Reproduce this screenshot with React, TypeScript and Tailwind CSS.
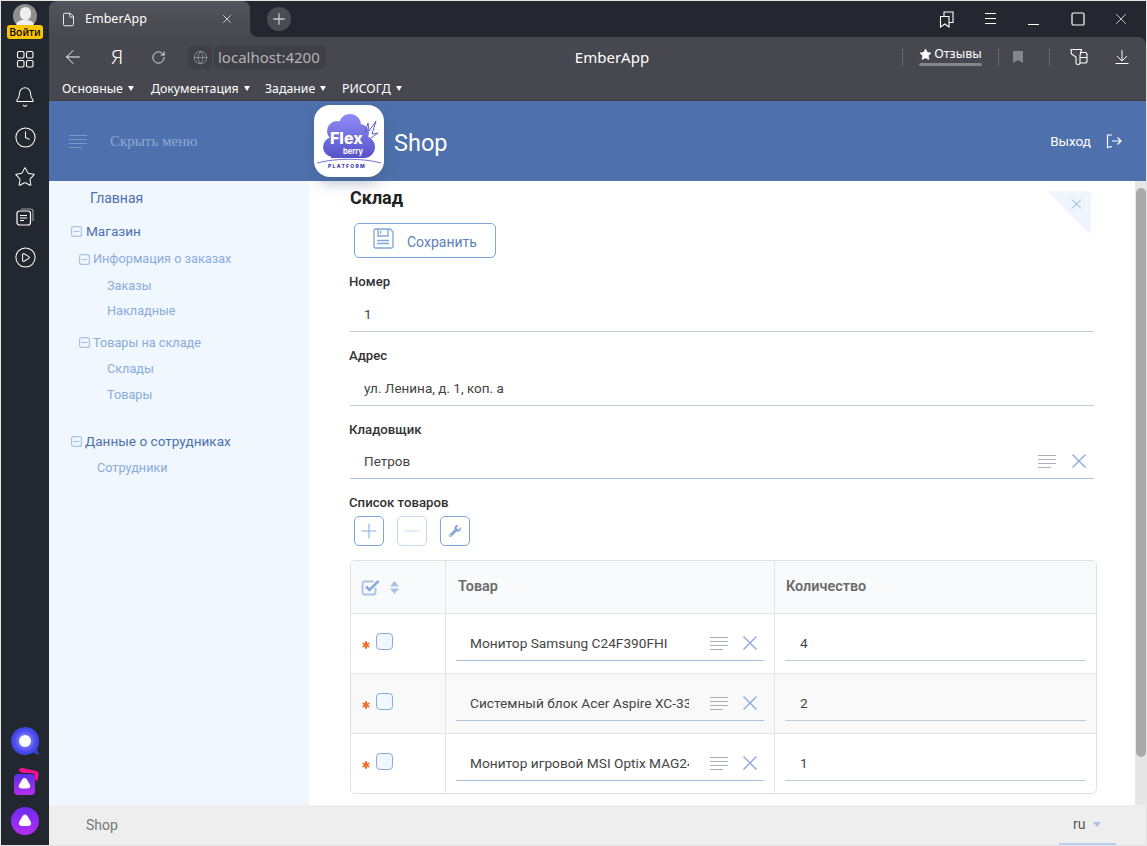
import React from "react";
import { ArrowLeft, Asterisk, Bell, CirclePlay, Clock, File, Globe, Minus, Plus, RotateCw, Square, Star, X } from "lucide-react";
import { FaWrench } from "react-icons/fa";

const pageFont = "font-['Roboto','Liberation_Sans',sans-serif]";

const ListIcon = ({ className = "" }: { className?: string }) => (
  <svg viewBox="0 0 18 14" className={`w-[18px] h-[14px] ${className}`} fill="none" stroke="currentColor" strokeWidth="1">
    <path d="M0 1.5h18M0 5.5h18M0 9.5h18M0 13.5h13" />
  </svg>
);

const CloseIcon = ({ className = "" }: { className?: string }) => (
  <svg viewBox="0 0 14 14" className={`w-[14px] h-[14px] ${className}`} fill="none" stroke="#8aabdc" strokeWidth="1.4">
    <path d="M0.500 0.500l13 13M13.500 0.500l-13 13" />
  </svg>
);

const Tree = ({ className = "" }: { className?: string }) => (
  <svg viewBox="0 0 11 11" className={`w-[11px] h-[11px] shrink-0 ${className}`} fill="none" stroke="#a9c3e8" strokeWidth="1.2">
    <rect x="0.6" y="0.6" width="9.8" height="9.8" rx="2" />
    <path d="M2.5 5.5h6" />
  </svg>
);

const Caret = () => <span className="ml-[5px] inline-block w-0 h-0 border-x-[3.5px] border-x-transparent border-t-[5px] border-t-white mb-[2px]" />;

const Divider = () => <div className="w-px h-[17px] bg-[#6a6a72]" />;

const RailSlot = ({ children }: { children: React.ReactNode }) => (
  <div className="h-[20px] w-[24px] flex items-center justify-center">{children}</div>
);

const LeftRail = () => (
  <aside className="w-[48px] shrink-0 bg-[#23272f] flex flex-col items-center text-white">
    <div className="h-[38px] w-[48px] flex flex-col items-center pt-[3px]">
      <div className="w-[24px] h-[24px] rounded-full bg-[#8f8f8f] overflow-hidden flex flex-col items-center">
        <div className="w-[11px] h-[14px] rounded-full bg-[#eeeeee] mt-[3px]" />
        <div className="w-[20px] h-[8px] rounded-t-full bg-[#eeeeee]" />
      </div>
      <div className="-mt-[3px] relative w-[36px] h-[14px] rounded-[3px] bg-[#fdc500] text-black text-[10.5px] font-medium leading-[14px] text-center font-['Noto_Sans',sans-serif]">Войти</div>
    </div>
    <div className="flex flex-col items-center gap-[20px] mt-[10px]">
      <RailSlot>
        <svg viewBox="0 0 20 20" className="w-[20px] h-[20px]" fill="none" stroke="currentColor" strokeWidth="1.1">
          <rect x="2.5" y="2.5" width="6.5" height="6.5" rx="1.5" />
          <rect x="11.5" y="2.5" width="6.5" height="6.5" rx="1.5" />
          <rect x="2.5" y="11.5" width="6.5" height="6.5" rx="1.5" />
          <rect x="11.5" y="11.5" width="6.5" height="6.5" rx="1.5" />
        </svg>
      </RailSlot>
      <div className="-mt-[2px]"><RailSlot><Bell size={22} strokeWidth={1.1} /></RailSlot></div>
      <RailSlot><Clock size={23} strokeWidth={1.05} /></RailSlot>
      <RailSlot><Star size={22} strokeWidth={1.1} /></RailSlot>
      <RailSlot>
        <svg viewBox="0 0 20 20" className="w-[20px] h-[20px]" fill="none" stroke="currentColor" strokeWidth="1.2">
          <rect x="2" y="4" width="13.5" height="14" rx="2.5" />
          <path d="M5 8.5h7M5 11h7M5 13.5h4" />
          <path d="M6 2h9.5A2.5 2.5 0 0 1 18 4.500V14" stroke="#9a9a9a" />
        </svg>
      </RailSlot>
      <RailSlot><CirclePlay size={23} strokeWidth={1.05} /></RailSlot>
    </div>
    <div className="mt-auto flex flex-col items-center gap-[12px] pb-[10px]">
      <svg viewBox="0 0 28 28" className="w-[28px] h-[28px]">
        <defs>
          <radialGradient id="ali" cx="50%" cy="50%" r="55%">
            <stop offset="0%" stopColor="#a9a6ff" />
            <stop offset="70%" stopColor="#4a4af0" />
            <stop offset="100%" stopColor="#2f46d0" />
          </radialGradient>
        </defs>
        <path d="M14 0a14 14 0 1 0 8 25.500L28 28l-2-6.500A14 14 0 0 0 14 0z" fill="url(#ali)" />
        <circle cx="14" cy="14" r="6" fill="#fff" />
      </svg>
      <svg viewBox="0 0 28 28" className="w-[28px] h-[28px]">
        <defs>
          <linearGradient id="sq" x1="0" y1="0" x2="0" y2="1">
            <stop offset="0%" stopColor="#5a30e8" />
            <stop offset="100%" stopColor="#b22ef0" />
          </linearGradient>
        </defs>
        <path d="M8 4c0-3 2-3 4-3l13 3c2 .5 3 2 2.500 4l-1 6z" fill="#f5128c" />
        <rect x="3" y="6" width="21" height="21" rx="4" fill="#23272f" />
        <rect x="3" y="7" width="21" height="21" rx="4" fill="url(#sq)" />
        <path d="M13.500 11c1.200 0 2 .9 2.800 2.300l2.500 4.300c1.100 2 .2 3.900-2.300 3.900h-6c-2.500 0-3.400-1.900-2.300-3.900l2.500-4.300c.8-1.400 1.600-2.300 2.800-2.300z" fill="#fff" />
      </svg>
      <svg viewBox="0 0 28 28" className="w-[28px] h-[28px]">
        <defs>
          <linearGradient id="ci" x1="0" y1="0" x2="0" y2="1">
            <stop offset="0%" stopColor="#6a2cf0" />
            <stop offset="100%" stopColor="#b52cf0" />
          </linearGradient>
        </defs>
        <circle cx="14" cy="14" r="14" fill="url(#ci)" />
        <path d="M14 7.500c1.300 0 2.100 1 3 2.500l2.600 4.600c1.300 2.400.2 4.400-2.500 4.400h-6.200c-2.700 0-3.800-2-2.500-4.400L11 10c.9-1.500 1.700-2.500 3-2.500z" fill="#fff" />
      </svg>
    </div>
  </aside>
);

const BrowserChrome = () => (
  <div className="bg-[#24272f] text-white font-['Noto_Sans','Open_Sans',sans-serif]">
    <div className="h-[36px] flex bg-[linear-gradient(#24272f_50%,#47474f_50%)]">
      <div className="w-[201px] rounded-t-lg bg-[linear-gradient(#54545c,#47474f)] flex items-center pl-[12px] pr-[16px]">
        <File size={15} strokeWidth={1.4} />
        <span className="ml-[9px] text-[12.5px] flex-1">EmberApp</span>
        <X size={14} strokeWidth={1.2} />
      </div>
      <div className="flex-1 rounded-bl-lg bg-[#24272f] flex items-center pl-[17px]">
        <div className="w-[24px] h-[24px] rounded-full bg-[#4a4c54] flex items-center justify-center">
          <Plus size={18} strokeWidth={1.7} className="text-[#c8c8c8]" />
        </div>
        <div className="ml-auto flex items-center gap-[26px] pr-[16px]">
          <svg viewBox="0 0 18 18" className="w-[18px] h-[18px] -ml-[1px]" fill="none" stroke="currentColor" strokeWidth="1.1">
            <path d="M2.500 6.500h8.500v10.500l-4.200-3-4.300 3zM6 6.500V2h9v10.500h-4" />
          </svg>
          <svg viewBox="0 0 18 18" className="w-[18px] h-[18px]" fill="none" stroke="currentColor" strokeWidth="1">
            <path d="M3 3.500h11M3 8.500h11M3 13.500h11" />
          </svg>
          <svg viewBox="0 0 18 18" className="w-[18px] h-[18px]" fill="none" stroke="currentColor" strokeWidth="1">
            <path d="M2 14.500h11" />
          </svg>
          <Square size={16} strokeWidth={1.2} absoluteStrokeWidth />
          <X size={18} strokeWidth={1} />
        </div>
      </div>
    </div>
    <div className="bg-[#47474f] rounded-tr-lg h-[64px] border-b border-[#3c3c44]">
      <div className="h-[40px] flex items-center">
        <div className="w-[278px] flex items-center shrink-0">
          <ArrowLeft size={22} strokeWidth={1.05} className="ml-[13px]" />
          <span className="ml-[27px] w-[14px] text-[20px] leading-[24px] font-light">Я</span>
          <RotateCw size={15} strokeWidth={1.3} className="ml-[26px]" />
          <div className="ml-[22px] w-[24px] h-[24px] rounded-md bg-[#3e3f47] flex items-center justify-center">
            <Globe size={15} strokeWidth={1.2} className="text-[#a0a0a0]" />
          </div>
          <div className="ml-[2px] h-[24px] px-[4px] w-[112px] rounded-md bg-[#3e3f47] text-[15px] leading-[24px] text-[#b4b4b4] whitespace-nowrap">localhost:4200</div>
        </div>
        <div className="flex-1 text-center text-[15px] pr-[5px]">EmberApp</div>
        <div className="flex items-center pr-[17px]">
          <Divider />
          <div className="flex flex-col items-center w-[63px] ml-[16px]">
            <span className="text-[12.5px] leading-[16px] flex items-center -mt-[2px]">
              <Star size={13} fill="white" strokeWidth={1} className="mr-[2px]" />
              Отзывы
            </span>
            <span className="w-full h-[3px] rounded-full bg-[#85858b] mt-[1px]" />
          </div>
          <div className="ml-[16px]"><Divider /></div>
          <svg viewBox="0 0 12 14" className="w-[12px] h-[14px] ml-[13px]"><path d="M1 1h10v12l-5-3-5 3z" fill="#85858b" /></svg>
          <div className="ml-[25px]"><Divider /></div>
          <svg viewBox="0 0 18 18" className="w-[18px] h-[18px] ml-[20px]" fill="none" stroke="currentColor" strokeWidth="1.100">
            <path d="M1 1.500h10.500l-1.500 6v7.500c0 2-4 2-4 0V9L1.500 6z" />
            <path d="M10.500 4.500h4.500a2 2 0 0 1 2 2V13a2 2 0 0 1-2 2h-5M10 9.500h7" />
          </svg>
          <svg viewBox="0 0 14 14" className="w-[14px] h-[14px] ml-[27px]" fill="none" stroke="currentColor" strokeWidth="1">
            <path d="M7 0v10.500M2 6l5 5 5-5M0.500 13.500h13" />
          </svg>
        </div>
      </div>
      <div className="flex items-center text-[12.3px] pl-[13px] leading-[18px] mt-[3px]">
        <span className="w-[89px]">Основные<Caret /></span>
        <span className="w-[114px]">Документация<Caret /></span>
        <span className="w-[77px]">Задание<Caret /></span>
        <span>РИСОГД<Caret /></span>
      </div>
    </div>
  </div>
);

const Logo = () => (
  <div className="relative w-[70px] h-[72px] rounded-[16px] bg-white shadow-[0_6px_14px_rgba(60,80,120,0.35)] shrink-0">
    <svg viewBox="0 0 70 72" className="w-full h-full">
      <defs>
        <linearGradient id="cloud" gradientUnits="userSpaceOnUse" x1="0" y1="9" x2="0" y2="54">
          <stop offset="0%" stopColor="#8f8cf6" />
          <stop offset="100%" stopColor="#5552c8" />
        </linearGradient>
      </defs>
      <g fill="url(#cloud)">
        <circle cx="36" cy="20" r="11" />
        <circle cx="23" cy="26" r="10" />
        <circle cx="46" cy="28" r="9" />
        <circle cx="19" cy="42" r="10" />
        <circle cx="50" cy="42" r="11" />
        <rect x="17" y="24" width="34" height="29" />
      </g>
      <path d="M3 58c18-5 46-5 64 0" fill="none" stroke="#5350c4" strokeWidth="0.8" />
      <path d="M51 28l3-10 1 8 7-10-4 13 6-1-7 5" stroke="#5350c4" strokeWidth="0.9" fill="none" />
      <text x="16" y="39" fontFamily="Inter, sans-serif" fontWeight="800" fontSize="16" fill="#fff">Flex</text>
      <text x="29" y="49" fontFamily="Inter, sans-serif" fontWeight="700" fontSize="7.500" fill="#fff">berry</text>
      <text x="14" y="63" fontFamily="Inter, sans-serif" fontWeight="800" fontSize="5" letterSpacing="1.300" fill="#3f3cb8">PLATFORM</text>
    </svg>
  </div>
);

const AppHeader = () => (
  <header className="h-[80px] bg-[#4e71ad] flex items-center shrink-0">
    <div className="w-[265px] shrink-0 flex items-center pl-[20px]">
      <ListIcon className="text-[#7c98c8]" />
      <span className="ml-[23px] font-['Liberation_Serif',serif] text-[15px] text-[#8fa8d2]">Скрыть меню</span>
    </div>
    <Logo />
    <span className={`ml-[10px] pt-[5px] text-[23.5px] text-white ${pageFont}`}>Shop</span>
    <div className={`ml-auto flex items-center pr-[24px] text-[13.5px] text-white ${pageFont}`}>
      Выход
      <svg viewBox="0 0 16 18" className="ml-[15px] w-[16px] h-[18px]" fill="none" stroke="#ffffff" strokeWidth="1.200">
        <path d="M6 3H1.500v12.500L6 14.500M6 9h9M11.500 5.500L15 9l-3.500 3.500" />
      </svg>
    </div>
  </header>
);

const Sidebar = () => (
  <nav className={`w-[260px] shrink-0 bg-[#f0f7ff] rounded-tr-md ${pageFont} text-[13.6px]`}>
    <div className="h-[34px] pl-[41px] leading-[34px] text-[14px] text-[#4e71ad]">Главная</div>
    <div className="h-[32px] pl-[22px] flex items-center text-[#4e71ad]"><Tree /><span className="ml-[4px]">Магазин</span></div>
    <div className="text-[12.7px] text-[#8aabdc]">
      <div className="h-[24px] pl-[30px] flex items-center"><Tree /><span className="ml-[3px]">Информация о заказах</span></div>
      <div className="h-[26px] pl-[58px] leading-[30px]">Заказы</div>
      <div className="h-[26px] pl-[58px] leading-[28px]">Накладные</div>
      <div className="h-[36px] pl-[30px] flex items-center pt-[3px]"><Tree /><span className="ml-[3px]">Товары на складе</span></div>
      <div className="h-[26px] pl-[58px] leading-[20px]">Склады</div>
      <div className="h-[26px] pl-[58px] leading-[20px]">Товары</div>
    </div>
    <div className="h-[34px] mt-[13px] pl-[22px] flex items-center text-[#4e71ad]"><Tree /><span className="ml-[3px]">Данные о сотрудниках</span></div>
    <div className="h-[18px] pl-[48px] text-[12.7px] leading-[20px] text-[#8aabdc]">Сотрудники</div>
  </nav>
);

const Field = ({ label, value, active, lookup }: { label: string; value: string; active?: boolean; lookup?: boolean }) => (
  <div className={`w-[744px] ${active ? "h-[73px]" : "h-[74px]"}`}>
    <div className="h-[20px] text-[13.2px] leading-[20px] font-medium text-[#333] -ml-px">{label}</div>
    <div className={`${active ? "mt-[4px]" : "mt-[5px]"} h-[35px] flex items-center pl-[14px] text-[13.5px] text-[#444] border-b ${active ? "border-[#a9c3e0]" : "border-[#c4ccd4]"}`}>
      <span className="flex-1">{value}</span>
      {lookup && (
        <>
          <ListIcon className="text-[#a8b0ba]" />
          <CloseIcon className="ml-[16px] mr-[8px]" />
        </>
      )}
    </div>
  </div>
);

const IconButton = ({ children, muted }: { children: React.ReactNode; muted?: boolean }) => (
  <button className={`w-[30px] h-[30px] rounded-[5px] border flex items-center justify-center ${muted ? "border-[#c8daf0]" : "border-[#7ea6d8]"}`}>
    {children}
  </button>
);

const rows = [
  { name: "Монитор Samsung C24F390FHI", qty: "4" },
  { name: "Системный блок Acer Aspire XC-330", qty: "2" },
  { name: "Монитор игровой MSI Optix MAG241C", qty: "1" },
];

const GoodsTable = () => (
  <div className="mt-[14px] w-[747px] h-[234px] border border-[#e0e1e2] rounded-[5px] overflow-hidden text-[13.7px]">
    <div className="h-[52px] bg-[#f9fafb] flex text-[14.4px] text-[#6b6b6b] font-semibold">
      <div className="w-[95px] border-r border-[#e4e5e6] flex items-center pl-[10px]">
        <svg viewBox="0 0 19 17" className="w-[19px] h-[17px]" fill="none">
          <path d="M14.500 9v4.500a2 2 0 0 1-2 2h-9a2 2 0 0 1-2-2v-9a2 2 0 0 1 2-2h9" stroke="#a9c3e8" strokeWidth="1.800" />
          <path d="M5 7.500l3.500 3.500L17.500 2" stroke="#8aabdc" strokeWidth="2.600" />
        </svg>
        <svg viewBox="0 0 9 13" className="ml-[10px] w-[9px] h-[13px]" fill="#a9c3e8">
          <path d="M4.500 0L9 5.500H0zM0 7.500h9L4.500 13z" />
        </svg>
      </div>
      <div className="w-[329px] border-r border-[#e4e5e6] flex items-center pl-[12px]">Товар</div>
      <div className="flex-1 flex items-center pl-[11px]">Количество</div>
    </div>
    {rows.map((row, i) => (
      <div key={row.name} className={`h-[60px] flex border-t border-[#e4e5e6] ${i === 1 ? "bg-[#f9f9f9]" : ""}`}>
        <div className="w-[95px] border-r border-[#e4e5e6] flex items-center pl-[9px] pb-[2px]">
          <Asterisk size={12} strokeWidth={4} className="text-[#f2702d] mt-[4px]" />
          <span className="ml-[4px] w-[17px] h-[17px] rounded-[4px] bg-[#f0f7ff] border border-[#8aabdc] -mt-[3px]" />
        </div>
        <div className="w-[329px] border-r border-[#e4e5e6] px-[10px]">
          <div className="mt-[12px] h-[35px] flex items-center border-b border-[#a9c3e0] pl-[14px] text-[#444]">
            <span className="w-[219px] overflow-hidden whitespace-nowrap">{row.name}</span>
            <ListIcon className="ml-[21px] text-[#a8b0ba]" />
            <CloseIcon className="ml-[15px]" />
          </div>
        </div>
        <div className="flex-1 px-[10px]">
          <div className="mt-[12px] h-[35px] flex items-center border-b border-[#c4ccd4] pl-[15px] text-[#444]">{row.qty}</div>
        </div>
      </div>
    ))}
  </div>
);

const Content = () => (
  <main className={`relative flex-1 pl-[41px] ${pageFont}`}>
    <h1 className="h-[34px] leading-[34px] text-[18px] font-bold text-[#222]">Склад</h1>
    <button className="ml-[4px] mt-[8px] w-[142px] h-[35px] rounded-[5px] border border-[#7ea6d8] flex items-center pl-[18px] text-[14px] text-[#5a82bd]">
      <svg viewBox="0 0 21 21" className="w-[21px] h-[21px] -mt-[4px]" fill="none" stroke="#7ea6d8" strokeWidth="1.300">
        <path d="M1 2.500A1.500 1.500 0 0 1 2.500 1H17l3 3v14.500a1.500 1.500 0 0 1-1.500 1.500h-16A1.500 1.500 0 0 1 1 18.500z" />
        <path d="M5 1v7h10V1M7.500 3v3M4 12.500h12M4 15.500h12" />
      </svg>
      <span className="ml-[13px] pt-[3px]">Сохранить</span>
    </button>
    <div className="mt-[14px]">
      <Field label="Номер" value="1" />
      <Field label="Адрес" value="ул. Ленина, д. 1, коп. а" />
      <Field label="Кладовщик" value="Петров" active lookup />
    </div>
    <div className="h-[20px] text-[13.2px] leading-[20px] font-medium text-[#333] -ml-px">Список товаров</div>
    <div className="mt-[3px] ml-[4px] flex gap-[13px]">
      <IconButton><Plus size={24} strokeWidth={1.100} className="text-[#8aabdc]" /></IconButton>
      <IconButton muted><Minus size={24} strokeWidth={1.100} className="text-[#c8daf0]" /></IconButton>
      <IconButton><FaWrench size={12} className="text-[#8aabdc]" /></IconButton>
    </div>
    <GoodsTable />
    <div className="absolute top-[10px] right-[44px] w-[42px] h-[42px]">
      <svg viewBox="0 0 42 42" className="w-full h-full">
        <path d="M3 0h35a4 4 0 0 1 4 4v35c0 3-2 3.500-4 1.500L1.500 3C0 1.500 1 0 3 0z" fill="#eef5fd" />
        <path d="M23 8.500l9 9M32 8.500l-9 9" stroke="#8aabdc" strokeWidth="1" />
      </svg>
    </div>
  </main>
);

const App = () => (
  <div className="w-[1147px] h-[846px] border border-[#e4e4e4] flex overflow-hidden bg-white">
    <LeftRail />
    <div className="flex-1 flex flex-col min-w-0">
      <BrowserChrome />
      <AppHeader />
      <div className="flex-1 flex min-h-0">
        <Sidebar />
        <Content />
        <div className="w-[11px] bg-[#e6e6e6] pt-[7px] pl-px">
          <div className="h-[569px] rounded-full bg-[#aaaaaa]" />
        </div>
      </div>
      <footer className={`h-[40px] shrink-0 bg-[#eeeeee] flex items-center pl-[37px] text-[14px] text-[#777] ${pageFont}`}>
        Shop
        <div className="relative ml-auto mr-[30px] w-[57px] h-[40px] flex items-center pl-[14px] border-b-2 border-[#b8d0ee]">
          <span className="text-[#555]">ru</span>
          <span className="ml-[8px] w-0 h-0 border-x-[4px] border-x-transparent border-t-[5px] border-t-[#a9c3e8]" />
        </div>
      </footer>
    </div>
  </div>
);

export default App;
